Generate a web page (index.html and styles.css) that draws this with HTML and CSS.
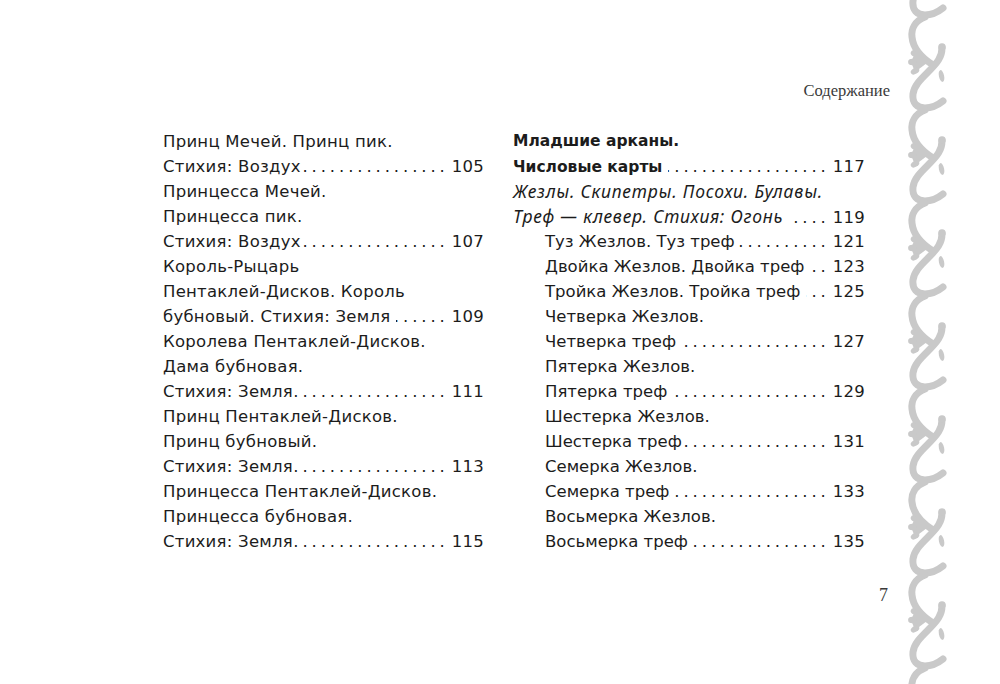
FILE: index.html
```html
<!DOCTYPE html>
<html lang="ru">
<head>
<meta charset="utf-8">
<title>Содержание</title>
<link rel="stylesheet" href="styles.css">
</head>
<body>
<div class="sheet">
  <div class="page">
    <div class="running-head">Содержание</div>
    <div class="toc">
      <div class="col">
        <div class="entry">
          <div class="line">Принц Мечей. Принц пик.</div>
          <div class="line lead"><span class="txt">Стихия: Воздух</span><span class="dots"></span><span class="pg">105</span></div>
        </div>
        <div class="entry">
          <div class="line">Принцесса Мечей.</div>
          <div class="line">Принцесса пик.</div>
          <div class="line lead"><span class="txt">Стихия: Воздух</span><span class="dots"></span><span class="pg">107</span></div>
        </div>
        <div class="entry">
          <div class="line">Король-Рыцарь</div>
          <div class="line">Пентаклей-Дисков. Король</div>
          <div class="line lead"><span class="txt">бубновый. Стихия: Земля&nbsp;</span><span class="dots"></span><span class="pg">109</span></div>
        </div>
        <div class="entry">
          <div class="line">Королева Пентаклей-Дисков.</div>
          <div class="line">Дама бубновая.</div>
          <div class="line lead"><span class="txt">Стихия: Земля</span><span class="dots"></span><span class="pg">111</span></div>
        </div>
        <div class="entry">
          <div class="line">Принц Пентаклей-Дисков.</div>
          <div class="line">Принц бубновый.</div>
          <div class="line lead"><span class="txt">Стихия: Земля</span><span class="dots"></span><span class="pg">113</span></div>
        </div>
        <div class="entry">
          <div class="line">Принцесса Пентаклей-Дисков.</div>
          <div class="line">Принцесса бубновая.</div>
          <div class="line lead"><span class="txt">Стихия: Земля</span><span class="dots"></span><span class="pg">115</span></div>
        </div>
      </div>
      <div class="col">
        <div class="entry">
          <div class="line strong">Младшие арканы.</div>
          <div class="line lead"><span class="txt strong">Числовые карты&nbsp;</span><span class="dots"></span><span class="pg">117</span></div>
        </div>
        <div class="entry">
          <div class="line em">Жезлы. Скипетры. Посохи. Булавы.</div>
          <div class="line lead"><span class="txt em">Треф — клевер. Стихия: Огонь&nbsp;</span><span class="dots"></span><span class="pg">119</span></div>
        </div>
        <div class="entry sub">
          <div class="line lead"><span class="txt">Туз Жезлов. Туз треф</span><span class="dots"></span><span class="pg">121</span></div>
        </div>
        <div class="entry sub">
          <div class="line lead"><span class="txt">Двойка Жезлов. Двойка треф&nbsp;</span><span class="dots"></span><span class="pg">123</span></div>
        </div>
        <div class="entry sub">
          <div class="line lead"><span class="txt">Тройка Жезлов. Тройка треф&nbsp;</span><span class="dots"></span><span class="pg">125</span></div>
        </div>
        <div class="entry sub">
          <div class="line">Четверка Жезлов.</div>
          <div class="line lead"><span class="txt">Четверка треф&nbsp;</span><span class="dots"></span><span class="pg">127</span></div>
        </div>
        <div class="entry sub">
          <div class="line">Пятерка Жезлов.</div>
          <div class="line lead"><span class="txt">Пятерка треф&nbsp;</span><span class="dots"></span><span class="pg">129</span></div>
        </div>
        <div class="entry sub">
          <div class="line">Шестерка Жезлов.</div>
          <div class="line lead"><span class="txt">Шестерка треф</span><span class="dots"></span><span class="pg">131</span></div>
        </div>
        <div class="entry sub">
          <div class="line">Семерка Жезлов.</div>
          <div class="line lead"><span class="txt">Семерка треф</span><span class="dots"></span><span class="pg">133</span></div>
        </div>
        <div class="entry sub">
          <div class="line">Восьмерка Жезлов.</div>
          <div class="line lead"><span class="txt">Восьмерка треф&nbsp;</span><span class="dots"></span><span class="pg">135</span></div>
        </div>
      </div>
    </div>
    <div class="folio">7</div>
  </div>
  <div class="border">
    <svg class="vine" width="100" height="684" viewBox="0 0 100 684" xmlns="http://www.w3.org/2000/svg">
      <defs>
        <g id="motif">
          <path class="stem" d="M25 2 C15 6 11 14 12 22 C13 33 22 43 33 50"/>
          <path class="stem" d="M42 33 C42 42 37 48 30 55 C22 63 14 70 13 79 C12 88 17 93 25 93 C32 93 38 90 43 86"/>
          <circle class="leaf" cx="42" cy="32" r="3.8"/>
          <polygon class="leaf" points="27,48 15,38 11,47 15,57"/>
          <ellipse class="leaf" cx="15" cy="39" rx="4.6" ry="3" transform="rotate(30 15 39)"/>
          <ellipse class="leaf" cx="12.5" cy="47" rx="4.4" ry="3.3"/>
          <ellipse class="leaf" cx="15" cy="56" rx="4.6" ry="3" transform="rotate(-30 15 56)"/>
          <ellipse class="leaf" cx="41.5" cy="61" rx="2.6" ry="6" transform="rotate(-12 41.5 61)"/>
        </g>
      </defs>
      <use href="#motif" y="-78"/>
      <use href="#motif" y="15"/>
      <use href="#motif" y="108"/>
      <use href="#motif" y="201"/>
      <use href="#motif" y="294"/>
      <use href="#motif" y="387"/>
      <use href="#motif" y="480"/>
      <use href="#motif" y="573"/>
      <use href="#motif" y="666"/>
    </svg>
  </div>
</div>
</body>
</html>
```

FILE: styles.css
```css
html, body {
  margin: 0;
  padding: 0;
  background: #ffffff;
}

.sheet {
  display: flex;
  width: 1000px;
  height: 684px;
  overflow: hidden;
}

.page {
  width: 900px;
  display: flex;
  flex-direction: column;
}

.running-head {
  padding: 81px 10px 0 0;
  text-align: right;
  font-family: "Liberation Serif", "Times New Roman", serif;
  font-size: 16.5px;
  line-height: 20px;
  color: #3a3a3a;
}

.toc {
  margin: 28px 0 0 163px;
  display: grid;
  grid-template-columns: 321px 352px;
  column-gap: 29px;
  font-family: "DejaVu Sans", "Noto Sans", sans-serif;
  font-size: 16.5px;
  letter-spacing: 0.25px;
  line-height: 25px;
  color: #1c1c1c;
}

.line {
  white-space: nowrap;
  height: 25px;
}

.lead {
  display: flex;
  align-items: baseline;
}

.txt {
  flex: none;
}

.dots {
  flex: 1;
  overflow: hidden;
  direction: rtl;
  white-space: nowrap;
  margin-right: 3px;
}

.dots::after {
  content: "................................................................";
  letter-spacing: 3.9px;
}

.pg {
  flex: none;
  letter-spacing: 0.25px;
}

.strong {
  font-weight: 700;
  font-size: 15.5px;
  letter-spacing: 0;
}

.em {
  font-family: "Noto Sans", "Open Sans", sans-serif;
  font-style: italic;
  font-size: 17.5px;
  letter-spacing: 0.8px;
}

.sub {
  padding-left: 32px;
  letter-spacing: 0;
}

.folio {
  margin-top: 31px;
  padding-right: 12px;
  text-align: right;
  font-family: "Liberation Serif", "Times New Roman", serif;
  font-size: 18px;
  line-height: 20px;
  color: #3a3a3a;
}

.border {
  width: 100px;
  height: 684px;
}

.vine {
  display: block;
}

.stem {
  fill: none;
  stroke: #c9c9c9;
  stroke-width: 7;
  stroke-linecap: round;
}

.leaf {
  fill: #c9c9c9;
}
```
